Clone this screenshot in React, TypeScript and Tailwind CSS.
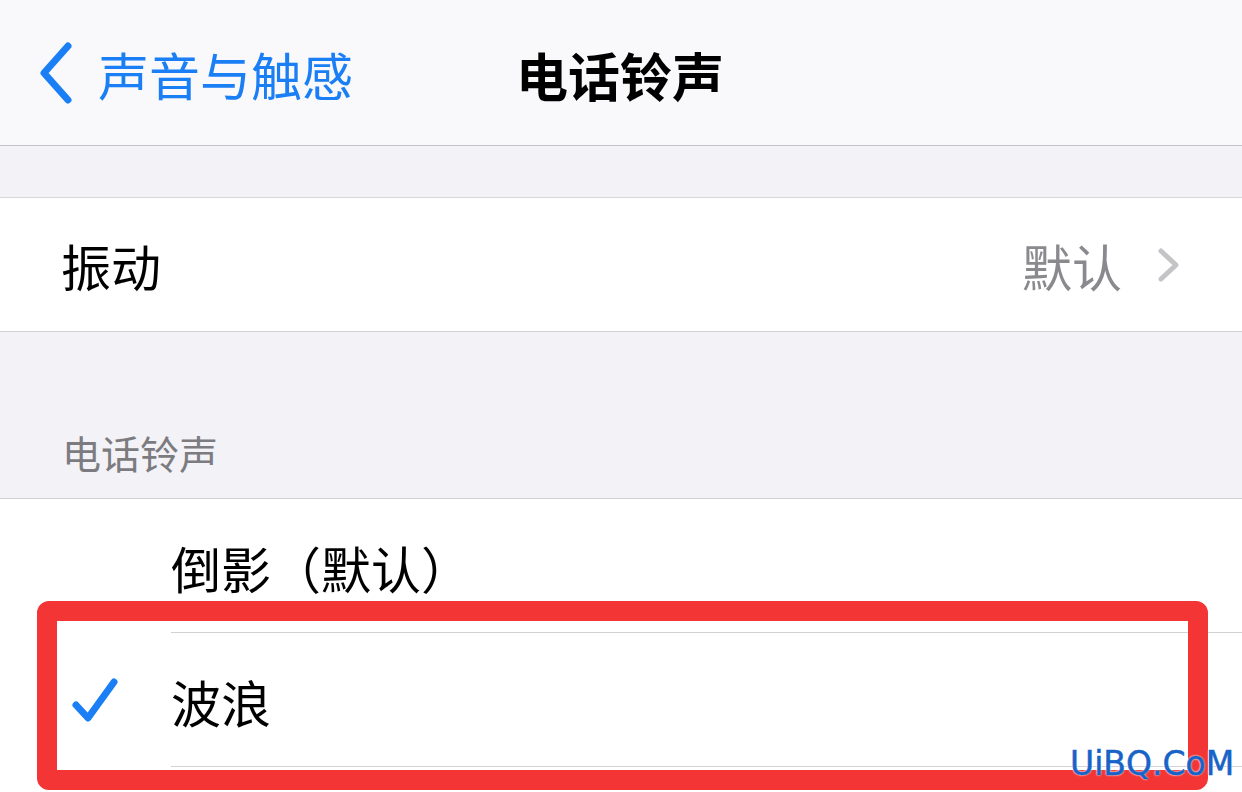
import React from "react";

const font = { fontFamily: '"Noto Sans CJK SC", "Noto Sans", sans-serif' };

const BackChevron = () => (
  <svg width="40" height="62" viewBox="0 0 40 62" className="shrink-0">
    <path d="M32 4 L8 31 L32 58" fill="none" stroke="#1a7ef5" strokeWidth="7" strokeLinecap="round" strokeLinejoin="round" />
  </svg>
);

const RightChevron = () => (
  <svg width="26" height="36" viewBox="0 0 26 36" className="shrink-0">
    <path d="M5 4 L20 18 L5 32" fill="none" stroke="#c4c4c7" strokeWidth="5" strokeLinecap="round" strokeLinejoin="round" />
  </svg>
);

const Check = () => (
  <svg width="48" height="46" viewBox="0 0 48 46" className="shrink-0">
    <path d="M5 28 L17 41 L43 5" fill="none" stroke="#1a7ef5" strokeWidth="7" strokeLinecap="round" strokeLinejoin="round" />
  </svg>
);

const ringtones = [
  { name: "倒影（默认）", checked: false },
  { name: "波浪", checked: true },
];

export default function App() {
  return (
    <div className="relative w-[1242px] h-[792px] overflow-hidden bg-white" style={font}>
      {/* 导航栏 */}
      <div className="relative h-[146px] bg-[#f9f9fb] border-b border-[#c4c4c8] flex items-center">
        <div className="flex items-center pl-[36px] gap-[22px] text-[#1a7ef5] text-[51px] leading-none">
          <BackChevron />
          <span className="mt-[4px]">声音与触感</span>
        </div>
        <div className="absolute left-0 right-0 top-0 bottom-0 flex items-center justify-center pointer-events-none">
          <span className="text-[52px] font-bold text-black leading-none -ml-[2px] mt-[4px]">电话铃声</span>
        </div>
      </div>

      <div className="h-[52px] bg-[#f2f2f7] border-b border-[#d8d8dc]" />

      {/* 振动 */}
      <div className="h-[134px] bg-white border-b border-[#d1d1d6] flex items-center pl-[61px] pr-[60px]">
        <span className="text-[50px] text-black leading-none flex-1">振动</span>
        <span className="text-[50px] text-[#8a8a8e] leading-none mr-[34px]">默认</span>
        <RightChevron />
      </div>

      {/* 分区标题 */}
      <div className="h-[167px] bg-[#f2f2f7] border-b border-[#d1d1d6] flex items-end pl-[62px] pb-[26px]">
        <span className="text-[39px] text-[#7c7c80] leading-none">电话铃声</span>
      </div>

      {/* 铃声列表 */}
      <div className="bg-white">
        {ringtones.map((r) => (
          <div key={r.name} className="flex items-center h-[134px]">
            <div className="w-[171px] flex items-center pl-[71px]">{r.checked && <Check />}</div>
            <div className="flex-1 h-full flex items-center border-b border-[#d1d1d6]">
              <span className="text-[50px] text-black leading-none mt-[2px]">{r.name}</span>
            </div>
          </div>
        ))}
      </div>

      {/* 红色标注框 */}
      <div className="absolute left-[37px] top-[601px] w-[1171px] h-[189px] border-[20px] border-[#f43535] rounded-[12px]" />

      {/* 水印 */}
      <div
        className="absolute left-[1070px] top-[747px] text-[33px] text-[#1763c8] leading-none"
        style={{ fontFamily: '"DejaVu Sans", sans-serif', WebkitTextStroke: "0.5px #1763c8", textShadow: "0 0 2px #fff, 0 0 2px #fff" }}
      >
        UiBQ.CoM
      </div>
    </div>
  );
}
